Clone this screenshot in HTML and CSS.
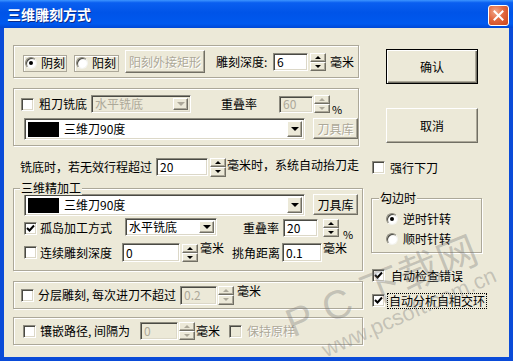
FILE: index.html
```html
<!DOCTYPE html>
<html lang="zh-CN">
<head>
<meta charset="utf-8">
<title>三维雕刻方式</title>
<link rel="stylesheet" href="styles.css">
</head>
<body>
<div class="window">
  <div class="titlebar">
    <span class="title">三维雕刻方式</span>
    <span class="close"><svg width="11" height="11" viewBox="0 0 11 11"><path d="M1.5 1.5 L9.5 9.5 M9.5 1.5 L1.5 9.5" stroke="#fff" stroke-width="2" stroke-linecap="square"/></svg></span>
  </div>
  <div class="client">
    <div class="left">
      <div class="group g1">
        <span class="radiobox"><span class="radio checked"></span><span class="rtext">阴刻</span></span>
        <span class="radiobox second"><span class="radio"></span><span class="rtext">阳刻</span></span>
        <span class="btn disabled btn-rect">阳刻外接矩形</span>
        <span class="lbl lbl-depth">雕刻深度:</span>
        <span class="edit e-depth">6</span>
        <span class="spin s-depth"><span class="sb"><i class="up"></i></span><span class="sb"><i class="dn"></i></span></span>
        <span class="lbl mm-depth">毫米</span>
      </div>

      <div class="group g2">
        <div class="row r21">
          <span class="cb"></span>
          <span class="lbl l-rough">粗刀铣底</span>
          <span class="combo disabled c-rough"><span class="ctext">水平铣底</span><span class="dd"><i class="dn"></i></span></span>
          <span class="lbl l-ov1">重叠率</span>
          <span class="edit disabled e-ov1">60</span>
          <span class="spin disabled s-ov1"><span class="sb"><i class="up"></i></span><span class="sb"><i class="dn"></i></span></span>
          <span class="lbl pct">%</span>
        </div>
        <div class="row r22">
          <span class="combo c-tool"><span class="swatch"></span><span class="ctext">三维刀90度</span><span class="dd"><i class="dn"></i></span></span>
          <span class="btn disabled btn-lib">刀具库</span>
        </div>
      </div>

      <div class="row note">
        <span class="lbl">铣底时，若无效行程超过</span>
        <span class="edit e-lift">20</span>
        <span class="spin s-lift"><span class="sb"><i class="up"></i></span><span class="sb"><i class="dn"></i></span></span>
        <span class="lbl l-lift">毫米时，系统自动抬刀走</span>
      </div>

      <div class="group g3">
        <span class="legend">三维精加工</span>
        <div class="row r31">
          <span class="combo c-tool"><span class="swatch"></span><span class="ctext">三维刀90度</span><span class="dd"><i class="dn"></i></span></span>
          <span class="btn btn-lib">刀具库</span>
        </div>
        <div class="row r32">
          <span class="cb checked"><svg width="9" height="9" viewBox="0 0 9 9"><path d="M1 4 L3.5 6.5 L8 1.5" fill="none" stroke="#000" stroke-width="2"/></svg></span>
          <span class="lbl l-island">孤岛加工方式</span>
          <span class="combo c-island"><span class="ctext">水平铣底</span><span class="dd"><i class="dn"></i></span></span>
          <span class="lbl l-ov2">重叠率</span>
          <span class="edit e-ov2">20</span>
          <span class="spin s-ov2"><span class="sb"><i class="up"></i></span><span class="sb"><i class="dn"></i></span></span>
          <span class="lbl pct pct2">%</span>
        </div>
        <div class="row r33">
          <span class="cb"></span>
          <span class="lbl l-cont">连续雕刻深度</span>
          <span class="edit e-cont">0</span>
          <span class="spin s-cont"><span class="sb"><i class="up"></i></span><span class="sb"><i class="dn"></i></span></span>
          <span class="lbl mm-up mm-cont">毫米</span>
          <span class="lbl l-corner">挑角距离</span>
          <span class="edit e-corner">0.1</span>
          <span class="lbl mm-up mm-corner">毫米</span>
        </div>
      </div>

      <div class="group g4">
        <span class="cb"></span>
        <span class="lbl l-layer">分层雕刻, 每次进刀不超过</span>
        <span class="edit disabled e-layer">0.2</span>
        <span class="spin disabled s-layer"><span class="sb"><i class="up"></i></span><span class="sb"><i class="dn"></i></span></span>
        <span class="lbl mm-up mm-layer">毫米</span>
      </div>

      <div class="group g5">
        <span class="cb"></span>
        <span class="lbl l-inlay">镶嵌路径, 间隔为</span>
        <span class="edit disabled e-inlay">0</span>
        <span class="spin disabled s-inlay"><span class="sb"><i class="up"></i></span><span class="sb"><i class="dn"></i></span></span>
        <span class="lbl mm-inlay">毫米</span>
        <span class="cb disabled-cb cb-keep"></span>
        <span class="lbl grey l-keep">保持原样</span>
      </div>
    </div>

    <div class="right">
      <span class="btn default btn-ok">确认</span>
      <span class="btn btn-cancel">取消</span>
      <div class="row r-force">
        <span class="cb"></span>
        <span class="lbl l-force">强行下刀</span>
      </div>
      <div class="group g-edge">
        <span class="legend">勾边时</span>
        <div class="row r-radio"><span class="radio checked"></span><span class="lbl l-radio">逆时针转</span></div>
        <div class="row r-radio r-radio2"><span class="radio"></span><span class="lbl l-radio">顺时针转</span></div>
      </div>
      <div class="row r-check1">
        <span class="cb checked"><svg width="9" height="9" viewBox="0 0 9 9"><path d="M1 4 L3.5 6.5 L8 1.5" fill="none" stroke="#000" stroke-width="2"/></svg></span>
        <span class="lbl l-check">自动检查错误</span>
      </div>
      <div class="row r-check2">
        <span class="cb checked"><svg width="9" height="9" viewBox="0 0 9 9"><path d="M1 4 L3.5 6.5 L8 1.5" fill="none" stroke="#000" stroke-width="2"/></svg></span>
        <span class="lbl l-check focus">自动分析自相交环</span>
      </div>
    </div>
  </div>

  <div class="wm wm-big">P C 下载网</div>
  <div class="wm wm-url">www.pcsoft.com.cn</div>
</div>
</body>
</html>
```

FILE: styles.css
```css
* { box-sizing: border-box; }

body {
  margin: 0;
  font: 12px/14px "Noto Sans CJK SC", "Liberation Sans", sans-serif;
  color: #000;
}

.window {
  width: 513px;
  height: 361px;
  background: #0a4bd8;
  display: flex;
  flex-direction: column;
  position: relative;
  overflow: hidden;
}

.titlebar {
  height: 28px;
  flex: none;
  display: flex;
  align-items: center;
  justify-content: space-between;
  padding: 0 4px 0 7px;
  background: linear-gradient(#3d95ff 0, #0a5ff0 10%, #0054e8 45%, #0059ef 85%, #0048d6 100%);
}

.title {
  color: #fff;
  font-weight: bold;
  font-size: 14px;
  line-height: 16px;
  text-shadow: 1px 1px 0 #0b2b8a;
}

.close {
  width: 21px;
  height: 21px;
  border: 1px solid #fff;
  border-radius: 3px;
  background: radial-gradient(circle at 35% 30%, #f2a78a 0, #e2683f 45%, #c9431a 100%);
  display: flex;
  align-items: center;
  justify-content: center;
  margin-top: 3px;
}

.client {
  flex: 1;
  margin: 0 4px 4px;
  background: #ece9d8;
  display: flex;
}

.left {
  margin-left: 9px;
  width: 350px;
  display: flex;
  flex-direction: column;
}

.right {
  margin-left: 8px;
  width: 125px;
  display: flex;
  flex-direction: column;
}

/* generic pieces */
.row { display: flex; align-items: center; }
.lbl { white-space: nowrap; flex: none; }
.grey { color: #aca899; text-shadow: 1px 1px 0 #fff; }

.group {
  border: 1px solid #aca899;
  box-shadow: inset 1px 1px 0 #fff, 1px 1px 0 #fff;
  position: relative;
}

.legend {
  position: absolute;
  top: -8px;
  background: #ece9d8;
  padding: 0 1px;
  line-height: 14px;
}

.btn {
  flex: none;
  display: flex;
  align-items: center;
  justify-content: center;
  white-space: nowrap;
  background: #ece9d8;
  border: 1px solid;
  border-color: #fff #716f64 #716f64 #fff;
  box-shadow: inset -1px -1px 0 #aca899;
}
.btn.disabled { color: #aca899; text-shadow: 1px 1px 0 #fff; }
.btn.default {
  border: 1px solid #000;
  box-shadow: inset 1px 1px 0 #fff, inset -1px -1px 0 #716f64, inset -2px -2px 0 #aca899;
}

.edit {
  flex: none;
  display: flex;
  align-items: center;
  padding-left: 3px;
  background: #fff;
  border: 1px solid;
  border-color: #8c8a7e #fff #fff #8c8a7e;
  box-shadow: inset 1px 1px 0 #4a4a44, inset -1px -1px 0 #dcd8c8;
}
.edit.disabled { background: #ece9d8; color: #aca899; }

.spin {
  flex: none;
  width: 16px;
  display: flex;
  flex-direction: column;
}
.sb {
  flex: 1;
  display: flex;
  align-items: center;
  justify-content: center;
  background: #ece9d8;
  border: 1px solid;
  border-color: #fff #716f64 #716f64 #fff;
  box-shadow: inset -1px -1px 0 #aca899;
}
.up, .dn {
  width: 0;
  height: 0;
  border-left: 3px solid transparent;
  border-right: 3px solid transparent;
}
.up { border-bottom: 3px solid #000; }
.dn { border-top: 3px solid #000; }
.spin.disabled .up { border-bottom-color: #aca899; }
.spin.disabled .dn { border-top-color: #aca899; }

.combo {
  flex: none;
  display: flex;
  align-items: center;
  background: #fff;
  border: 1px solid;
  border-color: #8c8a7e #fff #fff #8c8a7e;
  box-shadow: inset 1px 1px 0 #4a4a44, inset -1px -1px 0 #dcd8c8;
  padding: 2px 2px 2px 3px;
}
.combo.disabled { background: #ece9d8; color: #aca899; }
.combo .ctext { white-space: nowrap; }
.combo .dd {
  margin-left: auto;
  width: 15px;
  align-self: stretch;
  display: flex;
  align-items: center;
  justify-content: center;
  background: #ece9d8;
  border: 1px solid;
  border-color: #fff #716f64 #716f64 #fff;
  box-shadow: inset -1px -1px 0 #aca899;
}
.combo .dd .dn {
  border-left-width: 4px;
  border-right-width: 4px;
  border-top-width: 4px;
}
.combo.disabled .dd .dn { border-top-color: #aca899; }
.swatch {
  width: 31px;
  height: 15px;
  background: #000;
  margin-right: 5px;
  flex: none;
}

.cb {
  flex: none;
  width: 13px;
  height: 13px;
  background: #fff;
  border: 1px solid;
  border-color: #8c8a7e #fff #fff #8c8a7e;
  box-shadow: inset 1px 1px 0 #4a4a44, inset -1px -1px 0 #dcd8c8;
  display: flex;
  align-items: center;
  justify-content: center;
}
.disabled-cb { background: #ece9d8; }

.radio {
  flex: none;
  width: 12px;
  height: 12px;
  border-radius: 50%;
  background: radial-gradient(circle at 60% 60%, #fff 0, #fff 40%, #e4e2d8 100%);
  border: 1px solid;
  border-color: #8c8a7e #f4f4f0 #f4f4f0 #8c8a7e;
  box-shadow: inset 1px 1px 0 #4a4a44;
  position: relative;
}
.radio.checked::after {
  content: "";
  position: absolute;
  left: 3px;
  top: 3px;
  width: 4px;
  height: 4px;
  border-radius: 50%;
  background: #000;
}

/* group 1 */
.g1 {
  margin-top: 17px;
  width: 346px;
  height: 33px;
  display: flex;
  align-items: center;
  padding-left: 9px;
}
.radiobox {
  flex: none;
  display: flex;
  align-items: center;
  white-space: nowrap;
  width: 44px;
  height: 17px;
  padding-left: 1px;
  border: 1px solid #aca899;
  box-shadow: inset 1px 1px 0 #fff;
  margin-top: 3px;
}
.radiobox.second { width: 45px; margin-left: 7px; }
.rtext { margin-left: 4px; white-space: nowrap; }
.btn-rect { width: 80px; height: 23px; margin-left: 6px; }
.lbl-depth { margin-left: 11px; width: 56px; }
.e-depth { width: 35px; height: 18px; margin-left: 1px; }
.s-depth { height: 18px; margin-left: 2px; }
.mm-depth { margin-left: 4px; }

/* group 2 */
.g2 {
  margin-top: 10px;
  width: 346px;
  height: 58px;
  padding: 6px 0 0 7px;
}
.r21 { height: 18px; }
.l-rough { margin-left: 5px; width: 48px; }
.c-rough { width: 100px; height: 18px; margin-left: 4px; }
.l-ov1 { margin-left: 30px; width: 36px; }
.e-ov1 { width: 34px; height: 17px; margin-left: 22px; }
.s-ov1 { height: 18px; margin-left: 1px; }
.pct { margin-left: 2px; align-self: flex-end; margin-bottom: -3px; font-size: 11px; }
.r22 { margin-top: 5px; height: 22px; padding-left: 3px; align-items: flex-start; }
.c-tool { width: 281px; height: 22px; }
.btn-lib { width: 45px; height: 21px; margin-left: 8px; }

/* note row */
.note { margin-top: 11px; height: 20px; padding-left: 7px; }
.e-lift { width: 52px; height: 18px; margin-left: 4px; }
.s-lift { height: 19px; margin-left: 2px; }
.l-lift { margin-left: 1px; margin-top: -4px; }

/* group 3 */
.g3 {
  margin-top: 11px;
  width: 350px;
  height: 83px;
  padding: 5px 0 0 10px;
}
.g3 .legend { left: 6px; }
.r31 { height: 22px; align-items: flex-start; }
.r32 { margin-top: 2px; height: 20px; }
.l-island { margin-left: 3px; width: 72px; }
.c-island { width: 92px; height: 18px; margin-left: 13px; align-self: flex-start; }
.l-ov2 { margin-left: 26px; width: 36px; }
.e-ov2 { width: 35px; height: 18px; margin-left: 4px; }
.s-ov2 { height: 18px; margin-left: 5px; }
.pct2 { margin-left: 4px; }
.r33 { margin-top: 5px; height: 19px; }
.l-cont { margin-left: 3px; width: 72px; }
.e-cont { width: 58px; height: 19px; margin-left: 10px; }
.s-cont { height: 18px; margin-left: 2px; }
.mm-up { align-self: flex-start; margin-top: -2px; }
.mm-cont { margin-left: 2px; width: 24px; }
.l-corner { margin-left: 8px; width: 48px; }
.e-corner { width: 40px; height: 19px; margin-left: 2px; }
.mm-corner { margin-left: 1px; }

/* group 4 */
.g4 {
  margin-top: 10px;
  width: 350px;
  height: 28px;
  display: flex;
  align-items: center;
  padding-left: 7px;
}
.l-layer { margin-left: 4px; width: 142px; }
.e-layer { width: 37px; height: 19px; margin-left: 0; }
.s-layer { height: 19px; margin-left: 1px; }
.mm-layer { margin-left: 3px; margin-top: 2px; }

/* group 5 */
.g5 {
  margin-top: 8px;
  width: 350px;
  height: 28px;
  display: flex;
  align-items: center;
  padding-left: 9px;
}
.l-inlay { margin-left: 4px; width: 100px; }
.e-inlay { width: 38px; height: 18px; }
.s-inlay { height: 18px; margin-left: 1px; }
.mm-inlay { margin-left: 1px; width: 24px; }
.cb-keep { margin-left: 9px; }
.l-keep { margin-left: 5px; }

/* right column */
.btn-ok { width: 92px; height: 35px; margin: 21px 0 0 15px; }
.btn-cancel { width: 92px; height: 35px; margin: 24px 0 0 15px; }
.r-force { margin-top: 18px; height: 13px; padding-left: 1px; }
.l-force { margin-left: 5px; }
.g-edge {
  margin-top: 24px;
  width: 111px;
  height: 55px;
  padding: 14px 0 0 14px;
}
.g-edge .legend { left: 7px; }
.r-radio { height: 12px; }
.r-radio2 { margin-top: 8px; }
.l-radio { margin-left: 5px; }
.r-check1 { margin-top: 16px; height: 13px; padding-left: 1px; }
.r-check2 { margin-top: 12px; height: 13px; padding-left: 1px; }
.l-check { margin-left: 6px; }
.focus {
  outline: 1px dotted #000;
  outline-offset: 0;
  padding: 0 1px;
  margin-left: 3px;
}

/* watermark */
.wm {
  position: absolute;
  pointer-events: none;
  white-space: nowrap;
  color: rgba(110, 110, 110, 0.33);
  transform-origin: left bottom;
  font-family: "Liberation Sans", "Noto Sans CJK SC", sans-serif;
}
.wm-big {
  left: 296px;
  top: 300px;
  font-size: 40px;
  line-height: 46px;
  transform: rotate(-22deg);
  letter-spacing: 1px;
}
.wm-url {
  left: 328px;
  top: 338px;
  font-size: 22px;
  line-height: 24px;
  transform: rotate(-24deg);
}
```
